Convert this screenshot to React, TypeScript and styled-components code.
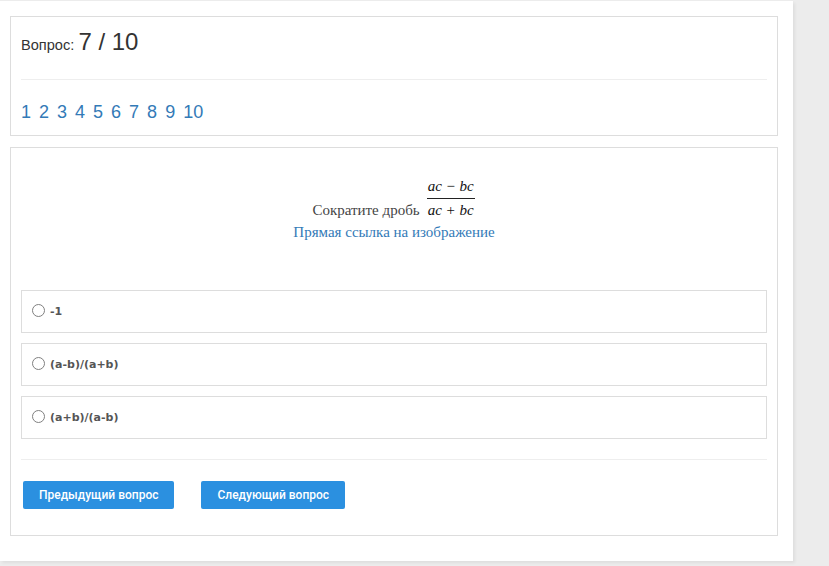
import styled, { createGlobalStyle } from "styled-components"

const Global = createGlobalStyle`
  html, body { margin: 0; padding: 0; background: #ececec; }
  body { font-family: "Liberation Sans", Arial, sans-serif; color: #333; }
`

const pages = [1, 2, 3, 4, 5, 6, 7, 8, 9, 10]
const answers = ["-1", "(a-b)/(a+b)", "(a+b)/(a-b)"]

const App = () => {
  return (
    <>
      <Global />
      <Page>
        <Panel>
          <Header>
            <Title>
              Вопрос: <Count>7 / 10</Count>
            </Title>
            <Rule $gap={24} />
            <Pager>
              {pages.map((p) => (
                <PageLink key={p} href="#">{p}</PageLink>
              ))}
            </Pager>
          </Header>
          <Question>
            <Task>
              <TaskLine>
                Сократите дробь
                <Fraction>
                  <Num>ac − bc</Num>
                  <Den>ac + bc</Den>
                </Fraction>
              </TaskLine>
              <ImgLink href="#">Прямая ссылка на изображение</ImgLink>
            </Task>
            <Answers>
              {answers.map((a) => (
                <Answer key={a}>
                  <Radio />
                  <AnswerText>{a}</AnswerText>
                </Answer>
              ))}
            </Answers>
            <Rule $gap={20} />
            <Buttons>
              <Button>Предыдущий вопрос</Button>
              <Button>Следующий вопрос</Button>
            </Buttons>
          </Question>
        </Panel>
      </Page>
    </>
  )
}
export default App

const Page = styled.div`
  width: 829px;
  height: 566px;
  overflow: hidden;
`

const Panel = styled.div`
  width: 783px;
  height: 545px;
  margin-top: 1px;
  padding: 15px 0 0 10px;
  background: #fff;
  box-shadow: 2px 2px 3px rgba(0, 0, 0, 0.06);
`

const Header = styled.div`
  width: 746px;
  height: 93px;
  border: 1px solid #ddd;
  padding: 12px 10px 13px 10px;
`

const Title = styled.div`
  font-size: 14.6px;
  line-height: 26px;
  height: 26px;
`

const Count = styled.span`
  font-size: 24px;
`

const Rule = styled.div<{ $gap: number }>`
  height: 1px;
  background: #eee;
  margin-top: ${(p) => p.$gap}px;
`

const Pager = styled.div`
  display: flex;
  gap: 8px;
  margin-top: 22px;
  line-height: 20px;
`

const PageLink = styled.a`
  font-size: 18px;
  color: #337ab7;
  text-decoration: none;
`

const Question = styled.div`
  width: 746px;
  height: 377px;
  margin-top: 11px;
  border: 1px solid #ddd;
  padding: 0 10px 10px 10px;
`

const Task = styled.div`
  display: flex;
  flex-direction: column;
  align-items: center;
  font-family: "Liberation Serif", "Times New Roman", serif;
  font-size: 15px;
  padding-top: 30px;
  height: 112px;
`

const TaskLine = styled.div`
  display: flex;
  align-items: flex-end;
  gap: 6px;
  color: #444;
  line-height: 17px;
`

const Fraction = styled.span`
  display: inline-flex;
  flex-direction: column;
  align-items: center;
  font-style: italic;
  font-size: 15px;
  line-height: 17px;
  padding: 0 1px;
  margin-bottom: 0;
`

const Num = styled.span`
  border-bottom: 1px solid #222;
  padding: 0 1px 3px;
  color: #111;
`

const Den = styled.span`
  padding-top: 3px;
  color: #111;
`

const ImgLink = styled.a`
  color: #337ab7;
  text-decoration: none;
  margin-top: 3px;
  line-height: 20px;
`

const Answers = styled.div`
  display: flex;
  flex-direction: column;
  gap: 10px;
`

const Answer = styled.label`
  display: flex;
  align-items: center;
  height: 41px;
  border: 1px solid #ddd;
  padding-left: 10px;
`

const Radio = styled.span`
  width: 11px;
  height: 11px;
  border: 1px solid #808080;
  border-radius: 50%;
  background: #fff;
  margin-right: 5px;
  margin-top: -2px;
`

const AnswerText = styled.span`
  font-family: "DejaVu Sans", Verdana, sans-serif;
  font-weight: bold;
  font-size: 11px;
  color: #555;
  margin-top: -1px;
`

const Buttons = styled.div`
  display: flex;
  gap: 27px;
  margin-top: 21px;
  padding-left: 2px;
`

const Button = styled.button`
  height: 28px;
  padding: 0 16px;
  border: none;
  border-radius: 2px;
  background: #2b90e0;
  color: #fff;
  font-family: Roboto, "Liberation Sans", sans-serif;
  font-weight: 500;
  font-size: 12px;
  cursor: pointer;
`
